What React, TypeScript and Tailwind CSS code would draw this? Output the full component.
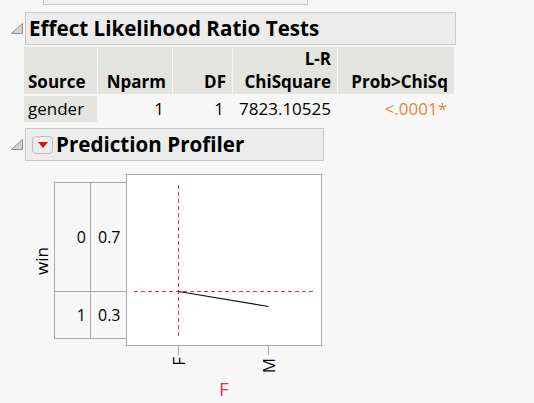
const Disclosure = () => (
  <svg width="14" height="11" viewBox="0 0 14 11" className="shrink-0">
    <polygon points="12.5,0.5 12.5,10.5 1.5,10.5" fill="#d4d4d4" stroke="#8c8c8c" strokeWidth="1" />
  </svg>
);

const RedMenu = () => (
  <div className="w-[21px] h-[18px] rounded-[4px] border border-[#bcbcbc] bg-[#ececec] flex items-center justify-center shrink-0">
    <svg width="10" height="6" viewBox="0 0 10 6">
      <polygon points="0,0 10,0 5,6" fill="#d0121e" />
    </svg>
  </div>
);

const HeadCell = ({ top, bottom, left }: { top?: string; bottom: string; left?: boolean }) => (
  <div
    className={`bg-[#e3e3df] h-[47px] flex flex-col justify-end pb-[1px] font-bold leading-[23px] ${
      left ? "items-start pl-[4px]" : "items-end pr-[6px]"
    }`}
  >
    {top && <span>{top}</span>}
    <span>{bottom}</span>
  </div>
);

const App = () => {
  return (
    <div
      className="w-[534px] h-[403px] overflow-hidden bg-[#f7f7f7] text-black text-[17px]"
      style={{ fontFamily: '"Open Sans", "Noto Sans", sans-serif' }}
    >
      <div className="ml-[43px] w-[265px] h-[5px] border-x border-b border-[#c8c8c8] bg-[#f0f0f0]" />

      {/* Effect Likelihood Ratio Tests */}
      <div className="mt-[7px] flex items-center pl-[10px] gap-[1px]">
        <Disclosure />
        <div className="w-[431px] h-[33px] border border-[#c8c8c8] bg-[#ececec] flex items-center pl-[3px]">
          <span className="font-bold text-[20.6px] leading-none">Effect Likelihood Ratio Tests</span>
        </div>
      </div>

      <div className="ml-[24px] mt-[2px] grid grid-cols-[73px_74px_59px_104px_116px] gap-x-px gap-y-[2px]">
        <HeadCell bottom="Source" left />
        <HeadCell bottom="Nparm" />
        <HeadCell bottom="DF" />
        <HeadCell top="L-R" bottom="ChiSquare" />
        <HeadCell bottom="Prob>ChiSq" />

        <div className="bg-[#e3e3df] h-[26px] flex items-center pl-[4px]">gender</div>
        <div className="h-[26px] flex items-center justify-end pr-[8px]">1</div>
        <div className="h-[26px] flex items-center justify-end pr-[8px]">1</div>
        <div className="h-[26px] flex items-center justify-end pr-[6px]">7823.10525</div>
        <div className="h-[26px] flex items-center justify-end pr-[7px] text-[#e8843c]">&lt;.0001*</div>
      </div>

      {/* Prediction Profiler */}
      <div className="mt-[6px] flex items-center pl-[10px] gap-[1px]">
        <Disclosure />
        <div className="w-[299px] h-[33px] border border-[#c8c8c8] bg-[#ececec] flex items-center pl-[6px] gap-[3px]">
          <RedMenu />
          <span className="font-bold text-[20.6px] leading-none">Prediction Profiler</span>
        </div>
      </div>

      <div className="mt-[13px] flex items-start text-[16px]">
        <div className="w-[54px] h-[157px] mt-[8px] flex items-center justify-end pr-[5px]">
          <span className="[writing-mode:vertical-rl] rotate-180 leading-[14px] text-[17px]">win</span>
        </div>

        <div className="w-[72px] h-[157px] mt-[8px] border-y border-l border-[#a8a8a8] flex">
          <div className="w-[36px] border-r border-[#a8a8a8] flex flex-col">
            <div className="h-[109px] border-b border-[#a8a8a8] flex items-center justify-end pr-[4px]">0</div>
            <div className="flex-1 flex items-center justify-end pr-[4px]">1</div>
          </div>
          <div className="flex-1 flex flex-col">
            <div className="h-[109px] border-b border-[#a8a8a8] flex items-center pl-[7px]">0.7</div>
            <div className="flex-1 flex items-center pl-[7px]">0.3</div>
          </div>
        </div>

        <div className="flex flex-col items-center">
          <div className="w-[196px] h-[172px] border border-[#a8a8a8] bg-white">
            <svg width="194" height="170" viewBox="0 0 194 170">
              <line x1="51.5" y1="10" x2="51.5" y2="164" stroke="#ee2a45" strokeWidth="1" strokeDasharray="4 3" />
              <line x1="7" y1="116.5" x2="186" y2="116.5" stroke="#ee2a45" strokeWidth="1" strokeDasharray="4 3" />
              <line x1="51.5" y1="116.5" x2="141.5" y2="131.5" stroke="#111" strokeWidth="1.2" />
            </svg>
          </div>
          <svg width="196" height="32" viewBox="0 0 196 32">
            <line x1="52.5" y1="0" x2="52.5" y2="9" stroke="#a8a8a8" />
            <line x1="142.5" y1="0" x2="142.5" y2="9" stroke="#a8a8a8" />
            <text x="0" y="0" transform="translate(59 11) rotate(-90)" textAnchor="end" fontSize="17" fill="#000">
              F
            </text>
            <text x="0" y="0" transform="translate(149 12) rotate(-90)" textAnchor="end" fontSize="17" fill="#000">
              M
            </text>
          </svg>
          <span className="text-[#ee3048] text-[19px] leading-[20px] mt-[1px]">F</span>
        </div>
      </div>
    </div>
  );
};

export default App;
